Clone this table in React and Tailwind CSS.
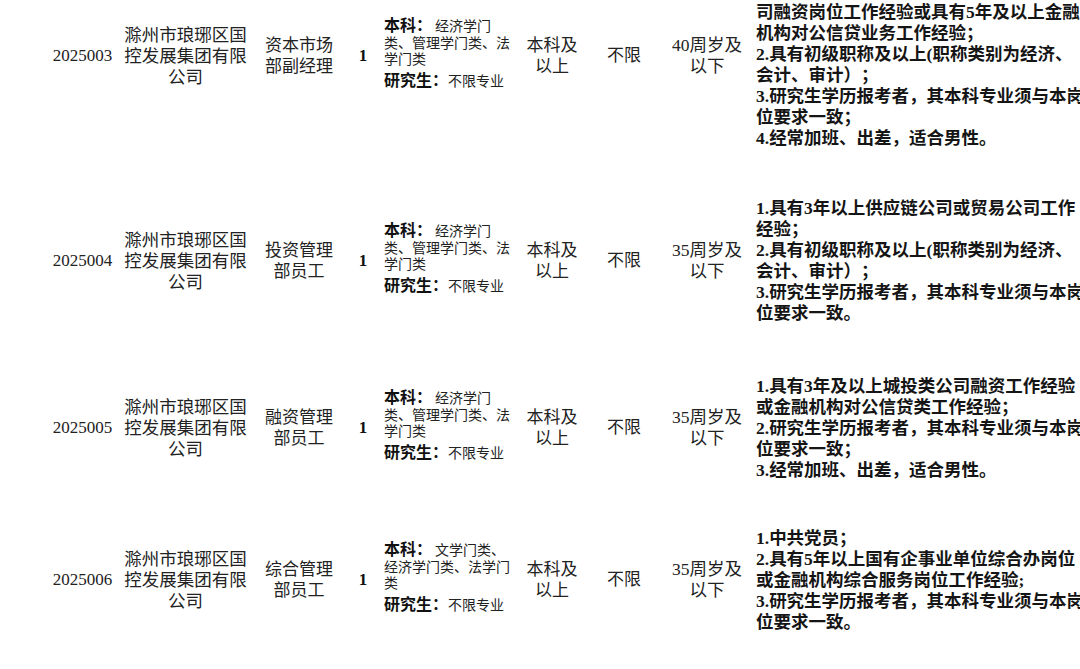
import React from "react";

const FONT = { fontFamily: '"Liberation Serif", "Noto Sans CJK SC", serif' };

const rows = [
  {
    code: "2025003",
    pos: ["资本市场", "部副经理"],
    edu: { first: "经济学门", rest: ["类、管理学门类、法", "学门类"] },
    age: "40",
    h: "h-[228px] -mt-[58px]",
    reqTop: "mt-[38px]",
    req: [
      "司融资岗位工作经验或具有5年及以上金融",
      "机构对公信贷业务工作经验；",
      "2.具有初级职称及以上(职称类别为经济、",
      "会计、审计）；",
      "3.研究生学历报考者，其本科专业须与本岗",
      "位要求一致；",
      "4.经常加班、出差，适合男性。",
    ],
  },
  {
    code: "2025004",
    pos: ["投资管理", "部员工"],
    edu: { first: "经济学门", rest: ["类、管理学门类、法", "学门类"] },
    age: "35",
    h: "h-[182px]",
    reqTop: "",
    req: [
      "1.具有3年以上供应链公司或贸易公司工作",
      "经验；",
      "2.具有初级职称及以上(职称类别为经济、",
      "会计、审计）；",
      "3.研究生学历报考者，其本科专业须与本岗",
      "位要求一致。",
    ],
  },
  {
    code: "2025005",
    pos: ["融资管理", "部员工"],
    edu: { first: "经济学门", rest: ["类、管理学门类、法", "学门类"] },
    age: "35",
    h: "h-[152px]",
    reqTop: "",
    req: [
      "1.具有3年及以上城投类公司融资工作经验",
      "或金融机构对公信贷类工作经验；",
      "2.研究生学历报考者，其本科专业须与本岗",
      "位要求一致；",
      "3.经常加班、出差，适合男性。",
    ],
  },
  {
    code: "2025006",
    pos: ["综合管理", "部员工"],
    edu: { first: "文学门类、", rest: ["经济学门类、法学门", "类"] },
    age: "35",
    h: "h-[152px]",
    reqTop: "",
    req: [
      "1.中共党员；",
      "2.具有5年以上国有企事业单位综合办岗位",
      "或金融机构综合服务岗位工作经验;",
      "3.研究生学历报考者，其本科专业须与本岗",
      "位要求一致。",
    ],
  },
];

const Row = ({ row }) => (
  <div className={`flex items-center ${row.h}`}>
    {/* 岗位代码 */}
    <div className="w-[77px] shrink-0 text-center text-[17px] text-[#222]">{row.code}</div>

    {/* 招聘单位 */}
    <div className="w-[129px] shrink-0 text-center text-[17.5px] leading-[21px] text-[#222] whitespace-nowrap">
      滁州市琅琊区国
      <br />
      控发展集团有限
      <br />
      公司
    </div>

    {/* 岗位名称 */}
    <div className="w-[98px] shrink-0 text-center text-[17px] leading-[21px] text-[#222] whitespace-nowrap">
      {row.pos[0]}
      <br />
      {row.pos[1]}
    </div>

    {/* 人数 */}
    <div className="w-[30px] shrink-0 text-center text-[17px] font-bold text-[#111]">1</div>

    {/* 专业 */}
    <div className="w-[142px] shrink-0 pl-[6px] whitespace-nowrap text-[#222]">
      <div className="leading-[18px]">
        <span className="text-[16px] font-bold text-[#111]">本科：</span>
        <span className="ml-[3px] text-[14px]">{row.edu.first}</span>
      </div>
      {row.edu.rest.map((t) => (
        <div key={t} className="text-[14px] leading-[16px]">
          {t}
        </div>
      ))}
      <div className="leading-[26px]">
        <span className="text-[16px] font-bold text-[#111]">研究生：</span>
        <span className="text-[14px]">不限专业</span>
      </div>
    </div>

    {/* 学历 */}
    <div className="w-[64px] shrink-0 text-center text-[17px] leading-[21px] text-[#222] whitespace-nowrap">
      本科及
      <br />
      以上
    </div>

    {/* 学位 */}
    <div className="w-[80px] shrink-0 text-center text-[17px] text-[#222]">不限</div>

    {/* 年龄 */}
    <div className="w-[86px] shrink-0 text-center text-[17.5px] leading-[21px] text-[#222] whitespace-nowrap">
      {row.age}周岁及
      <br />
      以下
    </div>

    {/* 其他条件 */}
    <div
      className={`flex-1 pl-[6px] whitespace-nowrap text-[17.5px] font-bold leading-[21px] text-[#151515] ${row.reqTop}`}
    >
      {row.req.map((t) => (
        <div key={t}>{t}</div>
      ))}
    </div>
  </div>
);

export default function App() {
  return (
    <div
      className="h-[669px] w-[1080px] overflow-hidden bg-white [text-spacing-trim:space-all]"
      style={FONT}
    >
      <div className="pl-[44px]">
        {rows.map((r) => (
          <Row key={r.code} row={r} />
        ))}
      </div>
    </div>
  );
}
